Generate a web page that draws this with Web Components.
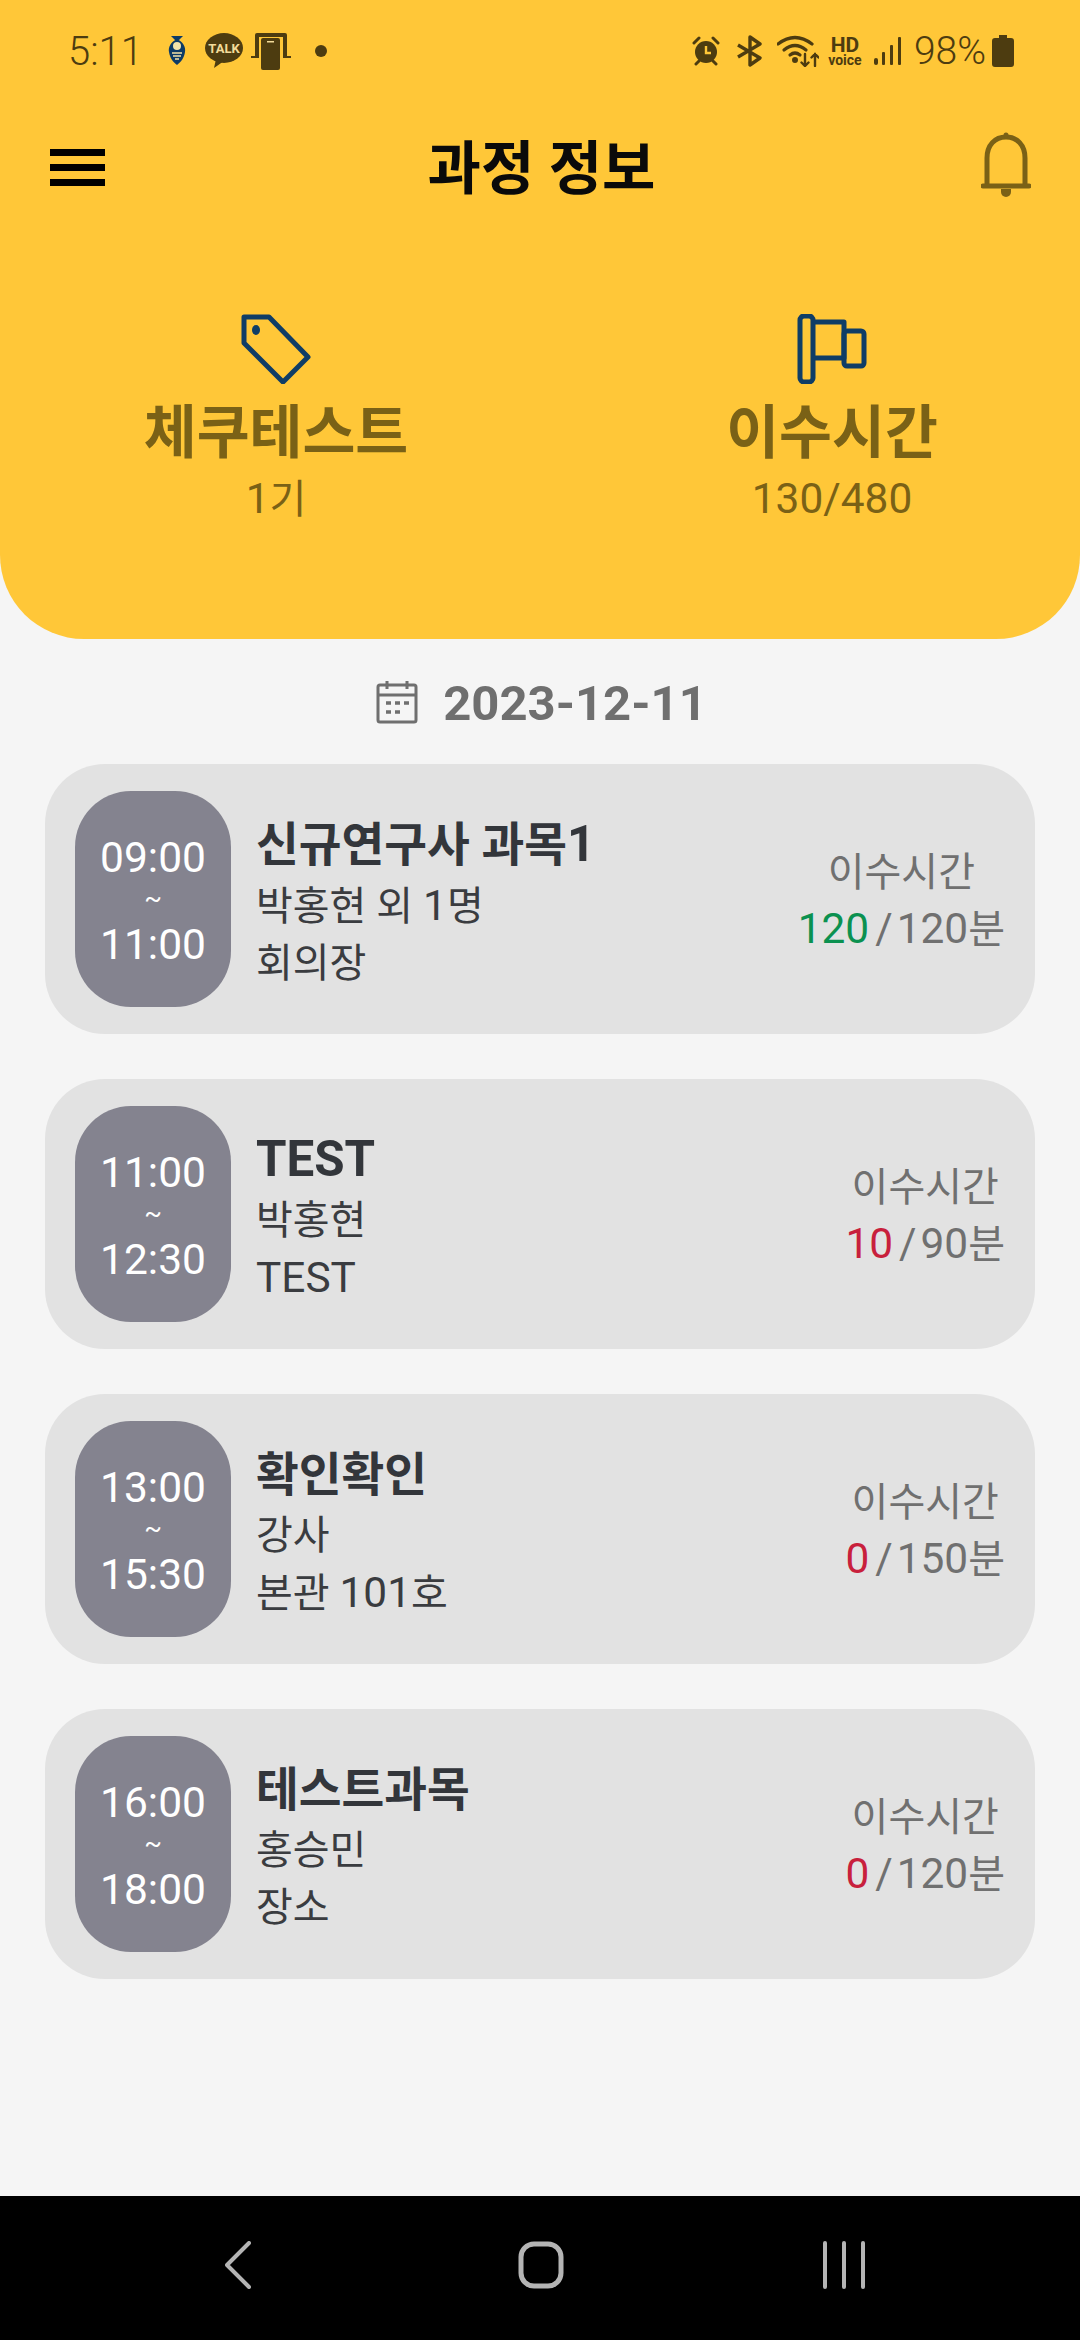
<!DOCTYPE html>
<html lang="ko">
<head>
<meta charset="utf-8">
<title>과정 정보</title>
<style>
  html, body { margin: 0; padding: 0; }
  body {
    width: 1080px;
    height: 2340px;
    display: flex;
    flex-direction: column;
    background: #f5f5f5;
    font-family: Roboto, "Noto Sans CJK KR", sans-serif;
    overflow: hidden;
  }
</style>
</head>
<body>
  <app-header title="과정 정보">
    <stat-item icon="tag" name="체쿠테스트" value="1기"></stat-item>
    <stat-item icon="flag" name="이수시간" value="130/480"></stat-item>
  </app-header>
  <course-list date="2023-12-11">
    <course-card start="09:00" end="11:00" name="신규연구사 과목1" teacher="박홍현 외 1명" place="회의장" done="120" total="120" state="ok"></course-card>
    <course-card start="11:00" end="12:30" name="TEST" teacher="박홍현" place="TEST" done="10" total="90"></course-card>
    <course-card start="13:00" end="15:30" name="확인확인" teacher="강사" place="본관 101호" done="0" total="150"></course-card>
    <course-card start="16:00" end="18:00" name="테스트과목" teacher="홍승민" place="장소" done="0" total="120"></course-card>
  </course-list>
  <nav-bar></nav-bar>

<script>
// latin and digits run a little larger than the hangul in the reference
const latin = s => s.replace(/[0-9A-Za-z:\/]+/g, m => `<span class="lat">${m}</span>`);

class StatusBar extends HTMLElement {
  constructor() {
    super();
    this.attachShadow({ mode: 'open' });
    this.shadowRoot.innerHTML = `
      <style>
        :host { display: flex; align-items: center; height: 102px; padding: 0 66px 0 68px; color: #4d3c10; font-size: 39px; font-weight: 300; }
        .left, .right { display: flex; align-items: center; }
        .right { margin-left: auto; }
        .time { font-size: 40px; margin-right: 24px; }
        svg { display: block; }
        .hd { width: 36px; margin-right: 11px; font-size: 14px; line-height: 12px; font-weight: 700; text-align: center; }
        .hd::first-line { font-size: 21px; line-height: 17px; }
        .pct { margin: 0 6px 0 13px; }
      </style>
      <div class="left">
        <span class="time">5:11</span>
        <svg width="20" height="32" viewBox="0 0 20 32" style="margin-right:18px">
          <path d="M4 1h12l-4 4h-4z" fill="#0d3b66"/>
          <path d="M10 4c6 3 9 8 8 13-1 6-4 10-8 13C6 27 3 23 2 17 1 12 4 7 10 4z" fill="#0d3b66"/>
          <circle cx="10" cy="11" r="4" fill="#f3e3a8"/>
          <path d="M5 18h10M6 21h8M8 24h4" stroke="#f3e3a8" stroke-width="1.5"/>
        </svg>
        <svg width="38" height="36" viewBox="0 0 38 36" style="margin-right:8px">
          <ellipse cx="19" cy="15" rx="19" ry="15" fill="#4d3c10"/>
          <path d="M11 26l-2 9 10-7z" fill="#4d3c10"/>
          <text x="19" y="20" text-anchor="middle" font-family="Roboto" font-weight="700" font-size="13" fill="#f3dc9a">TALK</text>
        </svg>
        <svg width="40" height="38" viewBox="0 0 40 38" style="margin-right:24px">
          <path d="M4 24V3q0-2 2-2h28q2 0 2 2v21h-4V5H8v19z" fill="#4d3c10"/>
          <path d="M0 24h8v2H0zM32 24h8v2h-8z" fill="#4d3c10"/>
          <rect x="10" y="6" width="19" height="32" rx="2" fill="#4d3c10"/>
          <rect x="16" y="9" width="7" height="1.5" fill="#f3dc9a"/>
        </svg>
        <svg width="12" height="12" viewBox="0 0 12 12"><circle cx="6" cy="6" r="6" fill="#4d3c10"/></svg>
      </div>
      <div class="right">
        <svg width="28" height="30" viewBox="0 0 28 30" style="margin-right:16px">
          <circle cx="14" cy="16" r="11" fill="#4d3c10"/>
          <path d="M14 10v7h5" stroke="#ffc738" stroke-width="2.4" fill="none"/>
          <path d="M2 7l5-5M26 7l-5-5" stroke="#4d3c10" stroke-width="3" stroke-linecap="round"/>
          <path d="M4 28l3-3M24 28l-3-3" stroke="#4d3c10" stroke-width="3" stroke-linecap="round"/>
        </svg>
        <svg width="26" height="32" viewBox="0 0 26 32" style="margin-right:15px" fill="none" stroke="#4d3c10" stroke-width="3.4" stroke-linejoin="round">
          <path d="M2 10l22 13-10 7V2l10 7L2 22"/>
        </svg>
        <svg width="42" height="32" viewBox="0 0 42 32" style="margin-right:8px" fill="none" stroke="#4d3c10" stroke-width="3.2" stroke-linecap="round">
          <path d="M1 9Q18-4 35 9"/><path d="M7 15Q18 6 29 15"/><path d="M13 20q5-4 10 0"/>
          <circle cx="18" cy="25" r="1.4" fill="#4d3c10"/>
          <path d="M28 19v12m-3.500-3.500 3.500 3.500 3.500-3.500M38 31V19m-3.500 3.500 3.500-3.500 3.500 3.500" stroke-width="2.400"/>
        </svg>
        <div class="hd">HD voice</div>
        <svg width="27" height="28" viewBox="0 0 27 28" fill="#4d3c10">
          <rect x="0" y="21" width="4" height="7" rx="2"/><rect x="8" y="15" width="3" height="13" rx="1"/><rect x="16" y="8" width="3" height="20" rx="1"/><rect x="24" y="0" width="3" height="28" rx="1"/>
        </svg>
        <span class="pct">98%</span>
        <svg width="22" height="32" viewBox="0 0 22 32" fill="#4d3c10"><path d="M7 0h8v3h4q3 0 3 3v23q0 3-3 3H3q-3 0-3-3V6q0-3 3-3h4z"/></svg>
      </div>`;
  }
}
customElements.define('status-bar', StatusBar);

class AppHeader extends HTMLElement {
  constructor() {
    super();
    this.attachShadow({ mode: 'open' });
  }

  connectedCallback() {
    this.shadowRoot.innerHTML = `
      <style>
        :host { display: block; flex: none; height: 639px; background: #ffc738; border-radius: 0 0 84px 84px; }
        .bar { display: flex; align-items: center; justify-content: space-between; height: 130px; padding: 0 49px 0 50px; }
        .menu { display: flex; flex-direction: column; gap: 8px; width: 55px; }
        .menu span { height: 7px; background: #000; }
        h1 { margin: 4px 3px 0 0; font-size: 58px; font-weight: 700; color: #0a0a0a; line-height: 1; }
        .bell { display: block; margin-top: -4px; }
        .stats { display: grid; grid-template-columns: 498px 498px; column-gap: 58px; padding: 82px 0 0 27px; }
      </style>
      <status-bar></status-bar>
      <div class="bar">
        <div class="menu"><span></span><span></span><span></span></div>
        <h1>${this.getAttribute('title') || ''}</h1>
        <svg class="bell" width="50" height="66" viewBox="0 0 50 66" fill="none" stroke="#7a6116" stroke-width="5">
          <path d="M6 54V26C6 13 14 5 25 5s19 8 19 21v28"/>
          <path d="M2 54h46" stroke-linecap="round"/>
          <circle cx="25" cy="3" r="2.500" fill="#7a6116" stroke="none"/>
          <path d="M20 57h10v3a5 5 0 0 1-10 0z" fill="#7a6116" stroke="none"/>
        </svg>
      </div>
      <div class="stats"><slot></slot></div>`;
  }
}
customElements.define('app-header', AppHeader);

const STAT_ICONS = {
  tag: `<svg width="70" height="70" viewBox="0 0 70 70" fill="none" stroke="#0f3d66" stroke-width="5" stroke-linejoin="round">
      <path d="M3 3h25l39 40-25 25L3 29z"/><ellipse cx="15" cy="16" rx="4" ry="5" fill="#0f3d66" stroke="none"/></svg>`,
  flag: `<svg width="70" height="70" viewBox="0 0 70 70" fill="none" stroke="#0f3d66" stroke-width="5" stroke-linejoin="round">
      <rect x="3" y="2" width="13" height="66" rx="4"/><path d="M16 8h31v36H16"/><rect x="47" y="17" width="20" height="35" rx="3"/></svg>`
};

class StatItem extends HTMLElement {
  constructor() {
    super();
    this.attachShadow({ mode: 'open' });
  }

  connectedCallback() {
    this.shadowRoot.innerHTML = `
      <style>
        :host { display: flex; flex-direction: column; align-items: center; color: #7a6116; }
        svg { display: block; }
        .name { font-size: 57.5px; font-weight: 700; line-height: 66px; margin-top: 17px; }
        .value { font-size: 40px; line-height: 48px; margin-top: 8px; }
        .lat { font-size: 1.06em; }
      </style>
      ${STAT_ICONS[this.getAttribute('icon')]}
      <div class="name">${this.getAttribute('name')}</div>
      <div class="value">${latin(this.getAttribute('value'))}</div>`;
  }
}
customElements.define('stat-item', StatItem);

class CourseList extends HTMLElement {
  constructor() {
    super();
    this.attachShadow({ mode: 'open' });
  }

  connectedCallback() {
    this.shadowRoot.innerHTML = `
      <style>
        :host { display: flex; flex-direction: column; flex: 1; padding: 0 45px; }
        .date { display: flex; align-items: center; justify-content: center; gap: 25px; height: 125px; padding-left: 3px; color: #6f6f6f; font-size: 49px; font-weight: 700; }
        .date span { padding-top: 3px; }
        .list { display: flex; flex-direction: column; gap: 45px; }
        svg { display: block; }
      </style>
      <div class="date">
        <svg width="42" height="44" viewBox="0 0 42 44" fill="none" stroke="#6f6f6f" stroke-width="3">
          <rect x="2" y="5" width="38" height="37" rx="2"/><path d="M2 15h38M11 1v8M31 1v8"/>
          <path d="M10 23h5M19 23h5M28 23h5M10 32h5M19 32h5" stroke-width="3.500"/>
        </svg>
        <span>${this.getAttribute('date')}</span>
      </div>
      <div class="list"><slot></slot></div>`;
  }
}
customElements.define('course-list', CourseList);

class CourseCard extends HTMLElement {
  constructor() {
    super();
    this.attachShadow({ mode: 'open' });
  }

  connectedCallback() {
    const attr = name => this.getAttribute(name);
    this.shadowRoot.innerHTML = `
      <style>
        :host { display: flex; align-items: center; height: 270px; padding: 0 30px; background: #e2e2e2; border-radius: 60px; box-sizing: border-box; }
        .time { flex: none; box-sizing: border-box; display: flex; flex-direction: column; align-items: center; justify-content: center; width: 156px; height: 216px; padding-top: 3px; border-radius: 56px; background: #84838f; color: #fff; font-size: 42.5px; line-height: 47px; }
        .time small { font-size: 26px; line-height: 40px; margin-top: -3px; padding-bottom: 3px; }
        .info { flex: 1; min-width: 0; margin-left: 25px; padding-top: 8px; color: #3a3c40; font-size: 40px; line-height: 57px; }
        .info h2 { margin: 0 0 2px; font-size: 46.5px; line-height: 60px; font-weight: 700; color: #33363b; }
        .credit { flex: none; display: flex; flex-direction: column; align-items: center; padding-top: 5px; color: #707070; font-size: 40px; line-height: 56px; }
        .lat { font-size: 1.06em; }
        .done { color: ${attr('state') === 'ok' ? '#0b9150' : '#c8203c'}; }
        .sep { margin: 0 4px 0 6px; }
      </style>
      <div class="time"><span>${attr('start')}</span><small>~</small><span>${attr('end')}</span></div>
      <div class="info">
        <h2>${latin(attr('name'))}</h2>
        <div>${latin(attr('teacher'))}</div>
        <div>${latin(attr('place'))}</div>
      </div>
      <div class="credit">
        <div>이수시간</div>
        <div><span class="lat done">${attr('done')}</span><span class="lat sep">/</span>${latin(attr('total'))}분</div>
      </div>`;
  }
}
customElements.define('course-card', CourseCard);

class NavBar extends HTMLElement {
  constructor() {
    super();
    this.attachShadow({ mode: 'open' });
    this.shadowRoot.innerHTML = `
      <style>
        :host { display: block; flex: none; height: 144px; background: #000; }
        .row { display: grid; grid-template-columns: repeat(3, 303px); justify-content: center; justify-items: center; align-items: center; height: 100%; padding: 0 0 6px 2px; box-sizing: border-box; }
        svg { display: block; }
      </style>
      <div class="row">
        <svg width="26" height="48" viewBox="0 0 26 48" fill="none" stroke="#b4b4b4" stroke-width="4" stroke-linecap="round" stroke-linejoin="round"><path d="M24 2L2 24l22 22"/></svg>
        <svg width="46" height="48" viewBox="0 0 46 48" fill="none" stroke="#b4b4b4" stroke-width="5"><rect x="3" y="3" width="40" height="42" rx="13"/></svg>
        <svg width="42" height="48" viewBox="0 0 42 48" fill="none" stroke="#b4b4b4" stroke-width="4" stroke-linecap="round"><path d="M2 2v44M21 2v44M40 2v44"/></svg>
      </div>`;
  }
}
customElements.define('nav-bar', NavBar);
</script>
</body>
</html>
